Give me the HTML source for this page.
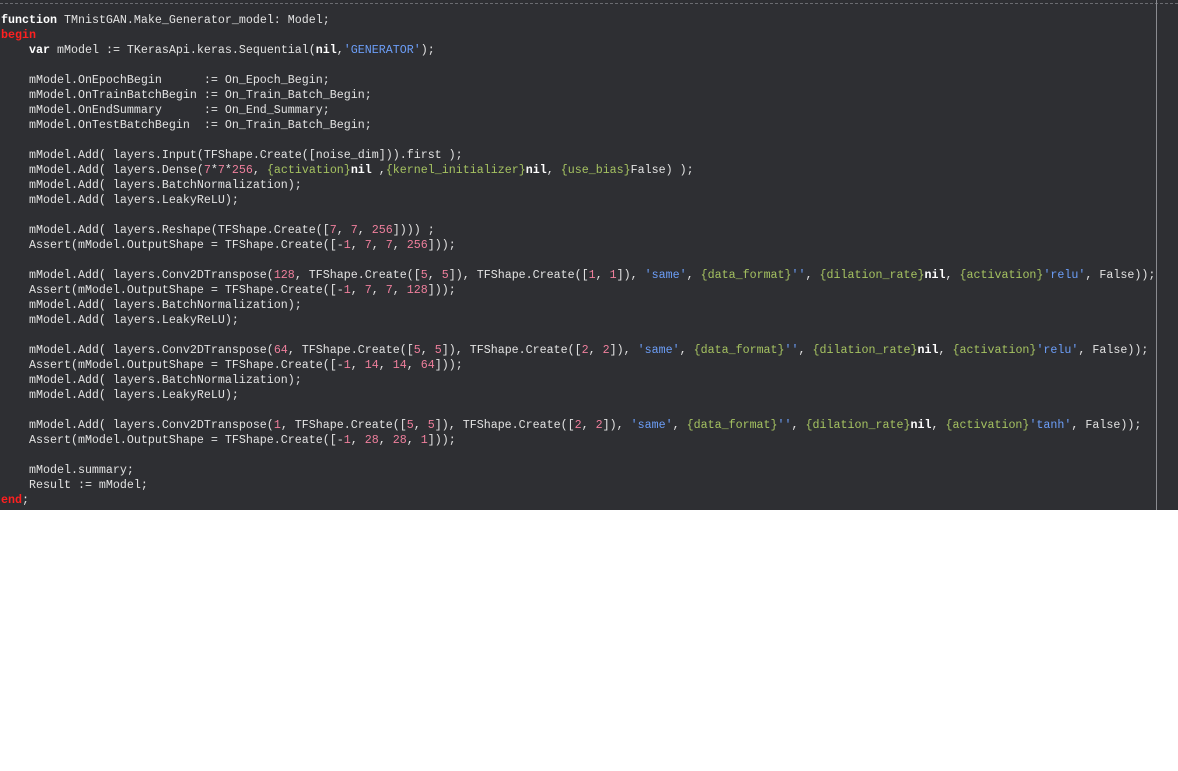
<!DOCTYPE html>
<html><head><meta charset="utf-8"><style>
html,body{margin:0;padding:0;background:#fff;width:1178px;height:771px;overflow:hidden}
#ed{position:absolute;left:0;top:0;width:1178px;height:510px;background:#2e2f33}
#dash{position:absolute;left:0;top:3px;width:1178px;border-top:1px dashed #6a6b70}
#vl{position:absolute;left:1156px;top:0;width:1px;height:510px;background:#8a8b90}
pre{position:absolute;left:1px;top:13px;margin:0;font-family:"Liberation Mono",monospace;font-size:11.67px;line-height:15px;color:#e2e2e2;letter-spacing:0}
.k{font-weight:bold;color:#fff}
.r{color:#ff2020;font-weight:bold}
.s{color:#6c9ef8}
.n{color:#ee7f9c}
.c{color:#a5c261}
</style></head><body>
<div id="ed"></div><div id="dash"></div><div id="vl"></div>
<pre><span class="k">function</span> TMnistGAN.Make_Generator_model: Model;
<span class="r">begin</span>
    <span class="k">var</span> mModel := TKerasApi.keras.Sequential(<span class="k">nil</span>,<span class="s">'GENERATOR'</span>);

    mModel.OnEpochBegin      := On_Epoch_Begin;
    mModel.OnTrainBatchBegin := On_Train_Batch_Begin;
    mModel.OnEndSummary      := On_End_Summary;
    mModel.OnTestBatchBegin  := On_Train_Batch_Begin;

    mModel.Add( layers.Input(TFShape.Create([noise_dim])).first );
    mModel.Add( layers.Dense(<span class="n">7</span>*<span class="n">7</span>*<span class="n">256</span>, <span class="c">{activation}</span><span class="k">nil</span> ,<span class="c">{kernel_initializer}</span><span class="k">nil</span>, <span class="c">{use_bias}</span>False) );
    mModel.Add( layers.BatchNormalization);
    mModel.Add( layers.LeakyReLU);

    mModel.Add( layers.Reshape(TFShape.Create([<span class="n">7</span>, <span class="n">7</span>, <span class="n">256</span>]))) ;
    Assert(mModel.OutputShape = TFShape.Create([-<span class="n">1</span>, <span class="n">7</span>, <span class="n">7</span>, <span class="n">256</span>]));

    mModel.Add( layers.Conv2DTranspose(<span class="n">128</span>, TFShape.Create([<span class="n">5</span>, <span class="n">5</span>]), TFShape.Create([<span class="n">1</span>, <span class="n">1</span>]), <span class="s">'same'</span>, <span class="c">{data_format}</span><span class="s">''</span>, <span class="c">{dilation_rate}</span><span class="k">nil</span>, <span class="c">{activation}</span><span class="s">'relu'</span>, False));
    Assert(mModel.OutputShape = TFShape.Create([-<span class="n">1</span>, <span class="n">7</span>, <span class="n">7</span>, <span class="n">128</span>]));
    mModel.Add( layers.BatchNormalization);
    mModel.Add( layers.LeakyReLU);

    mModel.Add( layers.Conv2DTranspose(<span class="n">64</span>, TFShape.Create([<span class="n">5</span>, <span class="n">5</span>]), TFShape.Create([<span class="n">2</span>, <span class="n">2</span>]), <span class="s">'same'</span>, <span class="c">{data_format}</span><span class="s">''</span>, <span class="c">{dilation_rate}</span><span class="k">nil</span>, <span class="c">{activation}</span><span class="s">'relu'</span>, False));
    Assert(mModel.OutputShape = TFShape.Create([-<span class="n">1</span>, <span class="n">14</span>, <span class="n">14</span>, <span class="n">64</span>]));
    mModel.Add( layers.BatchNormalization);
    mModel.Add( layers.LeakyReLU);

    mModel.Add( layers.Conv2DTranspose(<span class="n">1</span>, TFShape.Create([<span class="n">5</span>, <span class="n">5</span>]), TFShape.Create([<span class="n">2</span>, <span class="n">2</span>]), <span class="s">'same'</span>, <span class="c">{data_format}</span><span class="s">''</span>, <span class="c">{dilation_rate}</span><span class="k">nil</span>, <span class="c">{activation}</span><span class="s">'tanh'</span>, False));
    Assert(mModel.OutputShape = TFShape.Create([-<span class="n">1</span>, <span class="n">28</span>, <span class="n">28</span>, <span class="n">1</span>]));

    mModel.summary;
    Result := mModel;
<span class="r">end</span>;</pre>
</body></html>
